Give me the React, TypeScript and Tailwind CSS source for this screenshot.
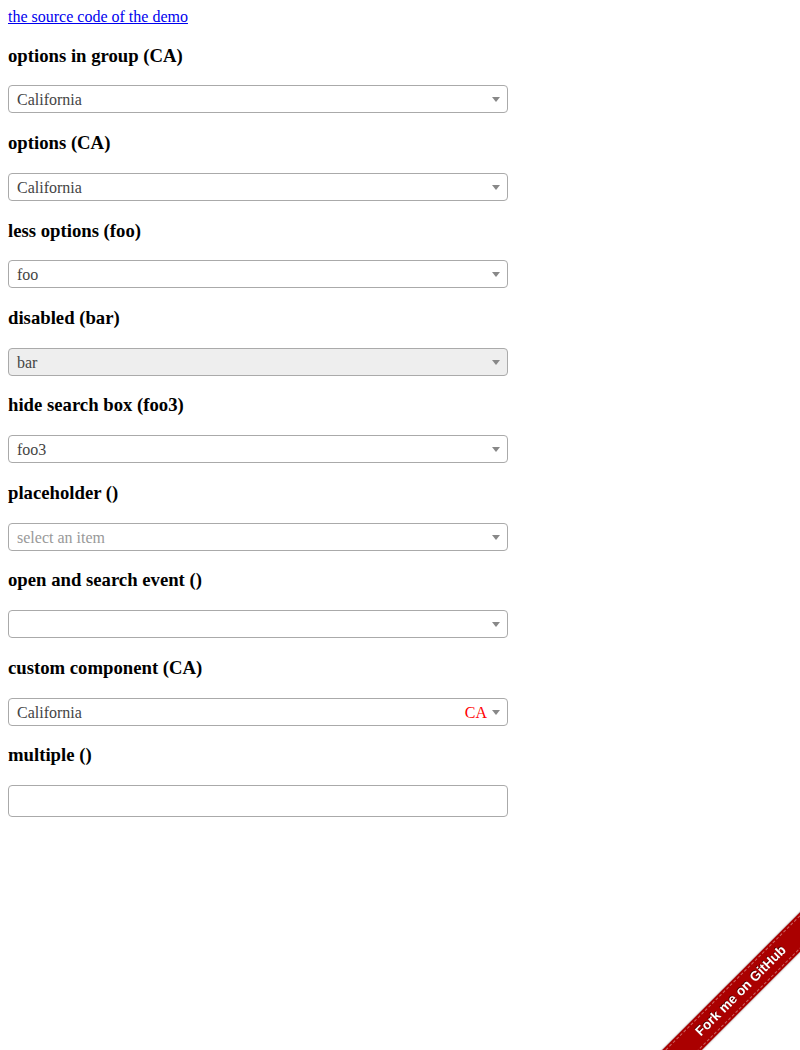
import React from "react";

function Arrow() {
  return (
    <span className="absolute right-[1px] top-0 h-[26px] w-[20px]">
      <span className="absolute left-1/2 top-1/2 -ml-[4px] -mt-[2px] h-0 w-0 border-x-[4px] border-t-[5px] border-x-transparent border-t-[#888]" />
    </span>
  );
}

function Select({
  value,
  placeholder,
  disabled,
  extra,
}: {
  value?: string;
  placeholder?: string;
  disabled?: boolean;
  extra?: string;
}) {
  return (
    <div
      className={`relative h-[28px] w-[500px] rounded-[4px] border border-[#aaa] ${
        disabled ? "bg-[#eee]" : "bg-white"
      }`}
    >
      <span className="flex h-[26px] items-start justify-between overflow-hidden pl-[8px] pr-[20px] text-[16px] leading-[28px]">
        {value ? (
          <span className="text-[#444]">{value}</span>
        ) : (
          <span className="text-[#999]">{placeholder ?? ""}</span>
        )}
        {extra && <span className="text-[#ff0000]">{extra}</span>}
      </span>
      <Arrow />
    </div>
  );
}

function H({ children }: { children: React.ReactNode }) {
  return (
    <h3 className="my-[18.72px] text-[18.72px] font-bold leading-[22px] text-black">
      {children}
    </h3>
  );
}

export default function App() {
  return (
    <div
      className="relative min-h-screen bg-white p-[8px] text-[16px] text-black"
      style={{ fontFamily: '"Liberation Serif", "Times New Roman", serif' }}
    >
      <div className="leading-[18px]">
        <a href="#" className="text-[#0000ee] underline">
          the source code of the demo
        </a>
      </div>
      <H>options in group (CA)</H>
      <Select value="California" />
      <H>options (CA)</H>
      <Select value="California" />
      <H>less options (foo)</H>
      <Select value="foo" />
      <H>disabled (bar)</H>
      <Select value="bar" disabled />
      <H>hide search box (foo3)</H>
      <Select value="foo3" />
      <H>placeholder ()</H>
      <Select placeholder="select an item" />
      <H>open and search event ()</H>
      <Select />
      <H>custom component (CA)</H>
      <Select value="California" extra="CA" />
      <H>multiple ()</H>
      <div className="h-[32px] w-[500px] rounded-[4px] border border-[#aaa] bg-white" />

      <div className="fixed bottom-0 right-0 h-[149px] w-[149px] overflow-hidden">
        <div className="absolute left-[-30px] top-[76px] flex h-[28px] w-[240px] -rotate-45 items-center justify-center bg-[#aa0000] shadow-[0_0_2px_rgba(0,0,0,0.5)]">
          <div className="absolute inset-x-0 top-[2px] border-t border-dashed border-white/40" />
          <div className="absolute inset-x-0 bottom-[2px] border-t border-dashed border-white/40" />
          <span
            className="text-[13.5px] font-bold text-white [text-shadow:0_-1px_0_rgba(0,0,0,0.6)]"
            style={{ fontFamily: '"Liberation Sans", Arial, sans-serif' }}
          >
            Fork me on GitHub
          </span>
        </div>
      </div>
    </div>
  );
}
